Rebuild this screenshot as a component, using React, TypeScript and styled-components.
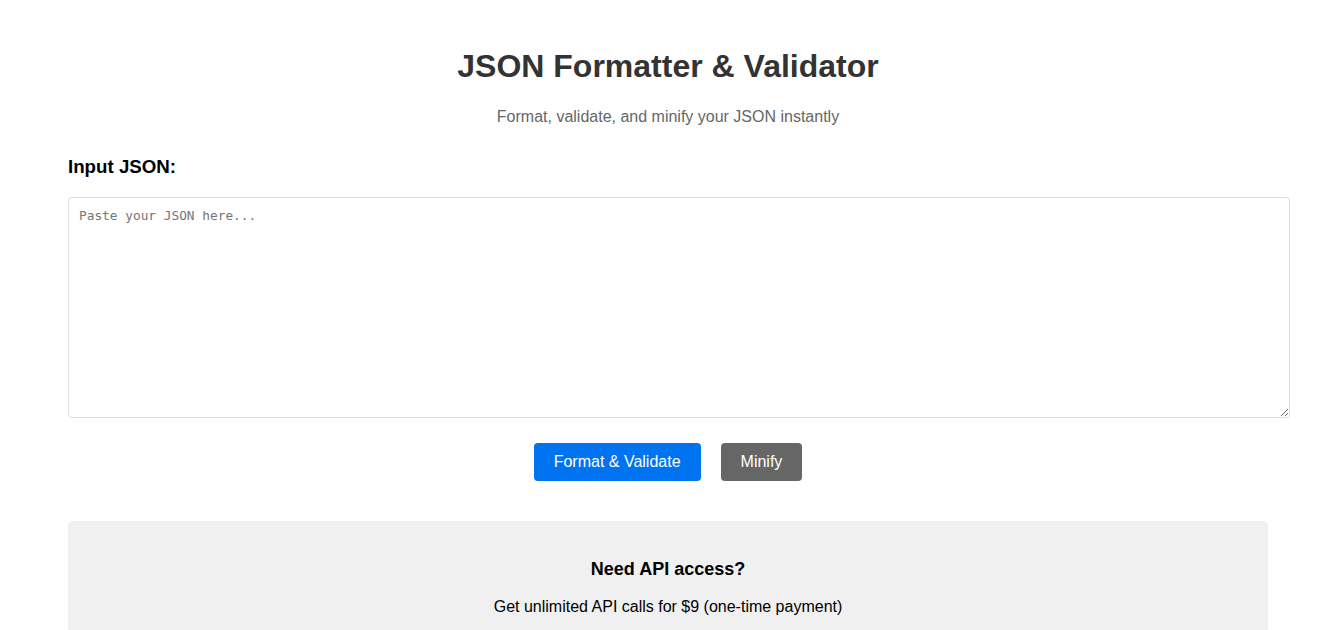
import React from "react";
import styled, { createGlobalStyle } from "styled-components";

const GlobalStyle = createGlobalStyle`
  * { box-sizing: border-box; }
  html, body { margin: 0; padding: 0; background: #ffffff; }
  body {
    font-family: "Liberation Sans", Arial, Helvetica, sans-serif;
    color: #000000;
  }
`;

const Page = styled.div`
  padding: 48px 0 40px 10px;
`;

const Container = styled.main`
  max-width: 1200px;
  margin: 0 auto;
`;

const Header = styled.header`
  text-align: center;
`;

const Title = styled.h1`
  margin: 0;
  font-size: 32px;
  line-height: 37px;
  font-weight: 700;
  color: #333333;
`;

const Subtitle = styled.p`
  margin: 23px 0 0;
  font-size: 16px;
  line-height: 18px;
  color: #666666;
`;

const Label = styled.label`
  display: block;
  margin: 30px 0 0;
  font-size: 18.72px;
  line-height: 22px;
  font-weight: 700;
  color: #000000;
`;

const Editor = styled.textarea`
  display: block;
  width: calc(100% + 22px);
  height: 221px;
  margin: 19px 0 0;
  padding: 10px;
  border: 1px solid #dddddd;
  border-radius: 4px;
  font-family: "DejaVu Sans Mono", "Liberation Mono", monospace;
  font-size: 12.8px;
  line-height: 16px;
  color: #333333;
  resize: vertical;
  outline: none;

  &::placeholder {
    color: #757575;
  }
`;

const Actions = styled.div`
  display: flex;
  justify-content: center;
  gap: 20px;
  margin-top: 25px;
`;

const Button = styled.button<{ $tone: "primary" | "secondary" }>`
  padding: 10px 20px;
  border: none;
  border-radius: 4px;
  font-family: "Liberation Sans", Arial, sans-serif;
  font-size: 16px;
  line-height: 18px;
  color: #ffffff;
  cursor: pointer;
  background: ${(p) => (p.$tone === "primary" ? "#0073f0" : "#666666")};
`;

const PromoBox = styled.section`
  margin-top: 40px;
  padding: 37px 20px 40px;
  background: #f0f0f0;
  border-radius: 5px;
  text-align: center;
`;

const PromoTitle = styled.h3`
  margin: 0;
  font-size: 18px;
  line-height: 22px;
  font-weight: 700;
`;

const PromoText = styled.p`
  margin: 18px 0 0;
  font-size: 16px;
  line-height: 18px;
`;

export default function App() {
  return (
    <>
      <GlobalStyle />
      <Page>
        <Container>
          <Header>
            <Title>JSON Formatter &amp; Validator</Title>
            <Subtitle>Format, validate, and minify your JSON instantly</Subtitle>
          </Header>
          <Label htmlFor="json-input">Input JSON:</Label>
          <Editor id="json-input" placeholder="Paste your JSON here..." />
          <Actions>
            <Button $tone="primary">Format &amp; Validate</Button>
            <Button $tone="secondary">Minify</Button>
          </Actions>
          <PromoBox>
            <PromoTitle>Need API access?</PromoTitle>
            <PromoText>Get unlimited API calls for $9 (one-time payment)</PromoText>
          </PromoBox>
        </Container>
      </Page>
    </>
  );
}
